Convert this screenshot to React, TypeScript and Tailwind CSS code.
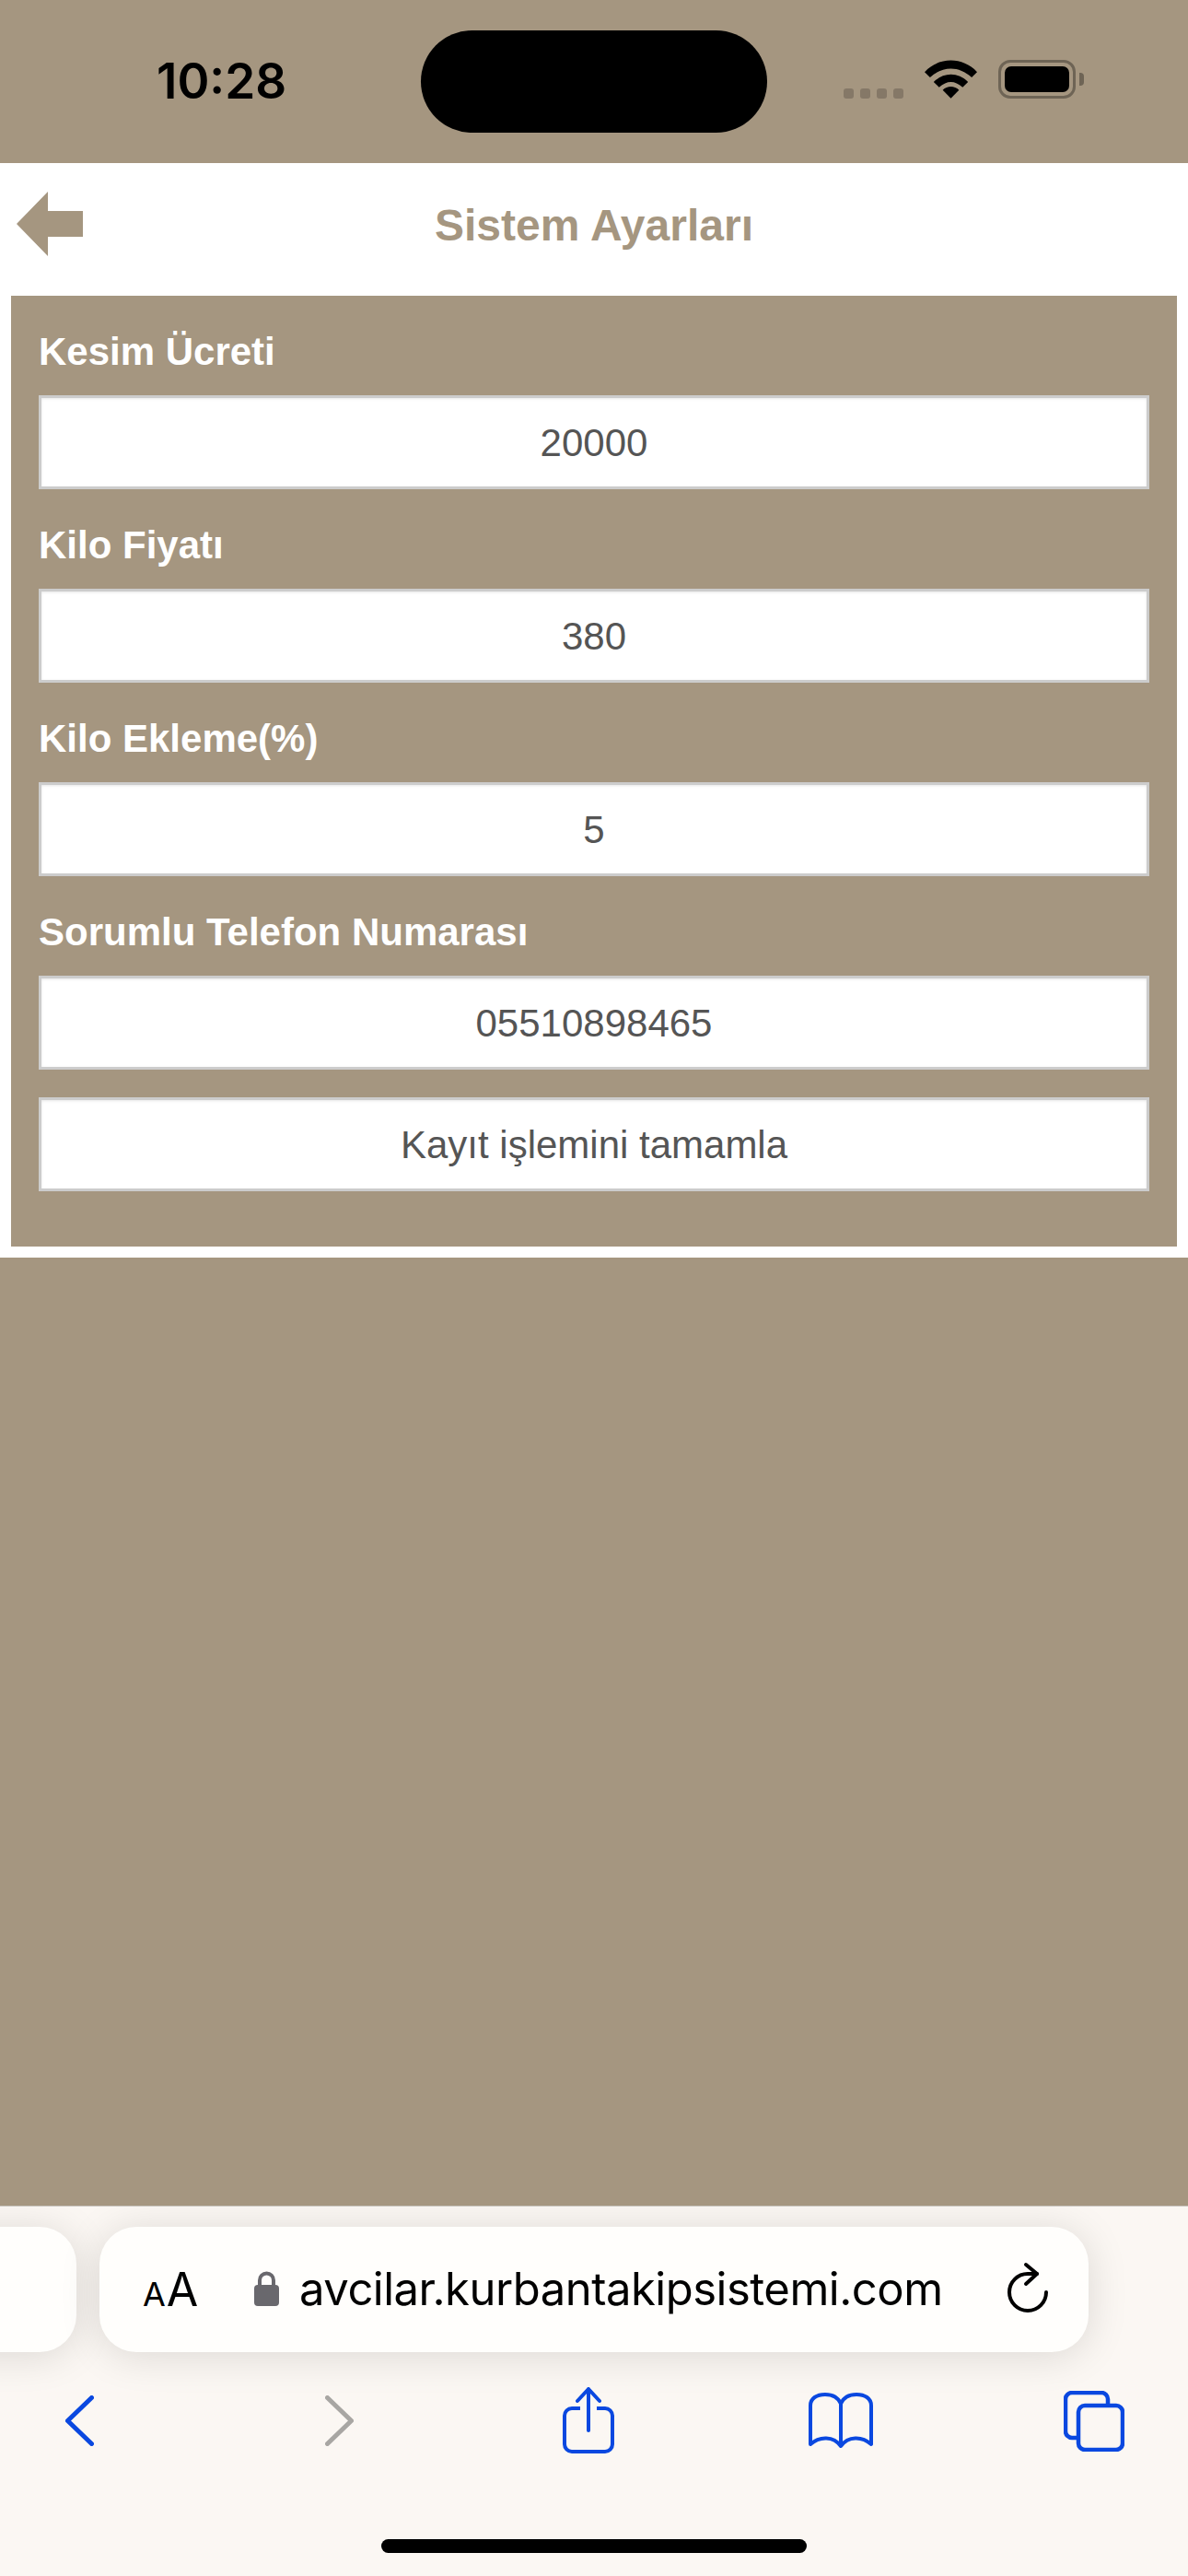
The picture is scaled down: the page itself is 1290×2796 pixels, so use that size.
import React from 'react';

const brown = 'bg-[#a59680]';

const Field = ({ label, value }: { label: string; value: string }) => (
  <div className="mb-[36px]">
    <div className="h-[49px] pt-[1px] text-[42px] leading-[48px] font-bold text-white">{label}</div>
    <div className="mt-[23px] flex h-[102px] items-center justify-center border-[3px] border-[#cccccc] bg-white text-[42px] text-[#555555] shadow-[inset_0_1px_3px_rgba(0,0,0,0.1)]">
      {value}
    </div>
  </div>
);

const StatusBar = () => (
  <div className={`flex h-[177px] items-start ${brown}`}>
    <div className="ml-[170px] mt-[57px] w-[144px] font-['Inter',sans-serif] text-[53px] leading-[62px] font-semibold text-black">10:28</div>
    <div className="ml-[143px] mt-[33px] h-[111px] w-[376px] rounded-[56px] bg-black" />
    <div className="ml-[83px] mt-[65px] flex items-start">
      <div className="mt-[31px] flex gap-[7px]">
        <div className="h-[11px] w-[11px] rounded-[3px] bg-[#857867]" />
        <div className="h-[11px] w-[11px] rounded-[3px] bg-[#857867]" />
        <div className="h-[11px] w-[11px] rounded-[3px] bg-[#857867]" />
        <div className="h-[11px] w-[11px] rounded-[3px] bg-[#857867]" />
      </div>
      <svg className="ml-[23px]" width="57" height="42" viewBox="0 0 58 42">
        <path d="M0 13 C16 -4 42 -4 58 13 L52 19 C38 6 20 6 6 19 Z" fill="#000" />
        <path d="M10 24 C21 13 37 13 48 24 L42 30 C33 22 25 22 16 30 Z" fill="#000" />
        <path d="M20 33 C25 28 33 28 38 33 L29 42 Z" fill="#000" />
      </svg>
      <div className="ml-[23px] flex items-center">
        <div className="h-[42px] w-[84px] rounded-[13px] border-[3px] border-[#6e6455] p-[4px]">
          <div className="h-full w-full rounded-[7px] bg-black" />
        </div>
        <div className="ml-[4px] h-[14px] w-[5px] rounded-r-[4px] bg-[#6e6455]" />
      </div>
    </div>
  </div>
);

const SafariBar = () => (
  <div className="flex h-[402px] flex-col overflow-hidden border-t border-[#c9c5c0] bg-[#fbf7f3]">
    <div className="flex items-start gap-[25px] pt-[22px]">
      <div className="ml-[-60px] h-[136px] w-[143px] shrink-0 rounded-[40px] bg-[#fffefc] shadow-[0_4px_44px_rgba(0,0,0,0.13)]" />
      <div className="flex h-[136px] w-[1074px] shrink-0 items-center rounded-[40px] bg-[#fffefc] shadow-[0_4px_44px_rgba(0,0,0,0.13)]">
        <div className="ml-[47px] flex w-[60px] items-baseline font-['Inter',sans-serif] font-normal leading-none text-black">
          <span className="text-[36px]">A</span>
          <span className="ml-[1px] text-[50px]">A</span>
        </div>
        <svg className="ml-[61px] mt-[-3px]" width="27" height="39" viewBox="0 0 27 39">
          <path d="M6 18 V11 a7.5 7.5 0 0 1 15 0 V18" fill="none" stroke="#69686d" strokeWidth="4" />
          <rect x="0" y="16" width="27" height="23" rx="4" fill="#69686d" />
        </svg>
        <div className="ml-[22px] font-['Inter',sans-serif] text-[49px] leading-[56px] tracking-[-0.5px] whitespace-nowrap text-black">
          avcilar.kurbantakipsistemi.com
        </div>
        <svg className="ml-auto mr-[32px] mt-[-5px]" width="70" height="75" viewBox="0 0 70 75">
          <path d="M46 23 H36 A20 20 0 1 0 56 43" fill="none" stroke="#000" strokeWidth="4" strokeLinecap="round" />
          <path d="M34 13 L46 23 L34 34" fill="none" stroke="#000" strokeWidth="4" strokeLinecap="round" strokeLinejoin="round" />
        </svg>
      </div>
    </div>
    <div className="mt-[38px] flex h-[72px] items-center">
      <svg className="ml-[71px]" width="31" height="55" viewBox="0 0 31 55">
        <path d="M28.5 2.5 L2.5 27.5 L28.5 52.5" fill="none" stroke="#0a48e0" strokeWidth="5" strokeLinecap="round" strokeLinejoin="round" />
      </svg>
      <svg className="ml-[251px]" width="31" height="55" viewBox="0 0 31 55">
        <path d="M2.5 2.5 L28.5 27.5 L2.5 52.5" fill="none" stroke="#a8a6a3" strokeWidth="5" strokeLinecap="round" strokeLinejoin="round" />
      </svg>
      <svg className="ml-[227px]" width="56" height="72" viewBox="0 0 56 72">
        <path d="M19 23 H10 a8 8 0 0 0 -8 8 V62 a8 8 0 0 0 8 8 H46 a8 8 0 0 0 8 -8 V31 a8 8 0 0 0 -8 -8 H37" fill="none" stroke="#0a48e0" strokeWidth="4" />
        <path d="M28 47 V2 M16 15 L28 2 L40 15" fill="none" stroke="#0a48e0" strokeWidth="4" strokeLinecap="round" strokeLinejoin="round" />
      </svg>
      <svg className="ml-[211px]" width="70" height="60" viewBox="0 0 70 60">
        <path d="M35 12 C32 5 26 2 18 2 C9 2 2 6 2 14 V56 C12 47 27 47 35 58 C43 47 58 47 68 56 V14 C68 6 61 2 52 2 C44 2 38 5 35 12 Z M35 12 V58" fill="none" stroke="#0a48e0" strokeWidth="4" strokeLinejoin="round" />
      </svg>
      <svg className="ml-[207px] mt-[2px]" width="66" height="66" viewBox="0 0 66 66">
        <path d="M14 51 H9 a7 7 0 0 1 -7 -7 V9 a7 7 0 0 1 7 -7 H41 a7 7 0 0 1 7 7 V14" fill="none" stroke="#0a48e0" strokeWidth="4.5" />
        <rect x="16" y="16" width="48" height="48" rx="7" fill="none" stroke="#0a48e0" strokeWidth="4.5" />
      </svg>
    </div>
    <div className="mt-[93px] flex justify-center">
      <div className="h-[15px] w-[462px] rounded-full bg-black" />
    </div>
  </div>
);

export default function App() {
  return (
    <div className="flex h-[2796px] w-[1290px] flex-col overflow-hidden bg-white font-['Liberation_Sans',sans-serif]">
      <StatusBar />
      <div className="relative flex h-[144px] items-center justify-center pb-[9px]">
        <svg className="absolute left-[18px] top-[31px]" width="72" height="70" viewBox="0 0 72 70">
          <path d="M0 35 L34 0 V21 H72 V49 H34 V70 Z" fill="#a59680" />
        </svg>
        <div className="text-[48px] font-bold text-[#a59680]">Sistem Ayarları</div>
      </div>
      <div className={`mx-[12px] px-[30px] pb-[60px] pt-[36px] ${brown}`}>
        <Field label="Kesim Ücreti" value="20000" />
        <Field label="Kilo Fiyatı" value="380" />
        <Field label="Kilo Ekleme(%)" value="5" />
        <div className="mb-[-6px]">
          <Field label="Sorumlu Telefon Numarası" value="05510898465" />
        </div>
        <div className="flex h-[102px] items-center justify-center border-[3px] border-[#cccccc] bg-white text-[42px] text-[#555555] shadow-[inset_0_1px_3px_rgba(0,0,0,0.1)]">
          Kayıt işlemini tamamla
        </div>
      </div>
      <div className={`mt-[12px] flex-1 ${brown}`} />
      <SafariBar />
    </div>
  );
}
